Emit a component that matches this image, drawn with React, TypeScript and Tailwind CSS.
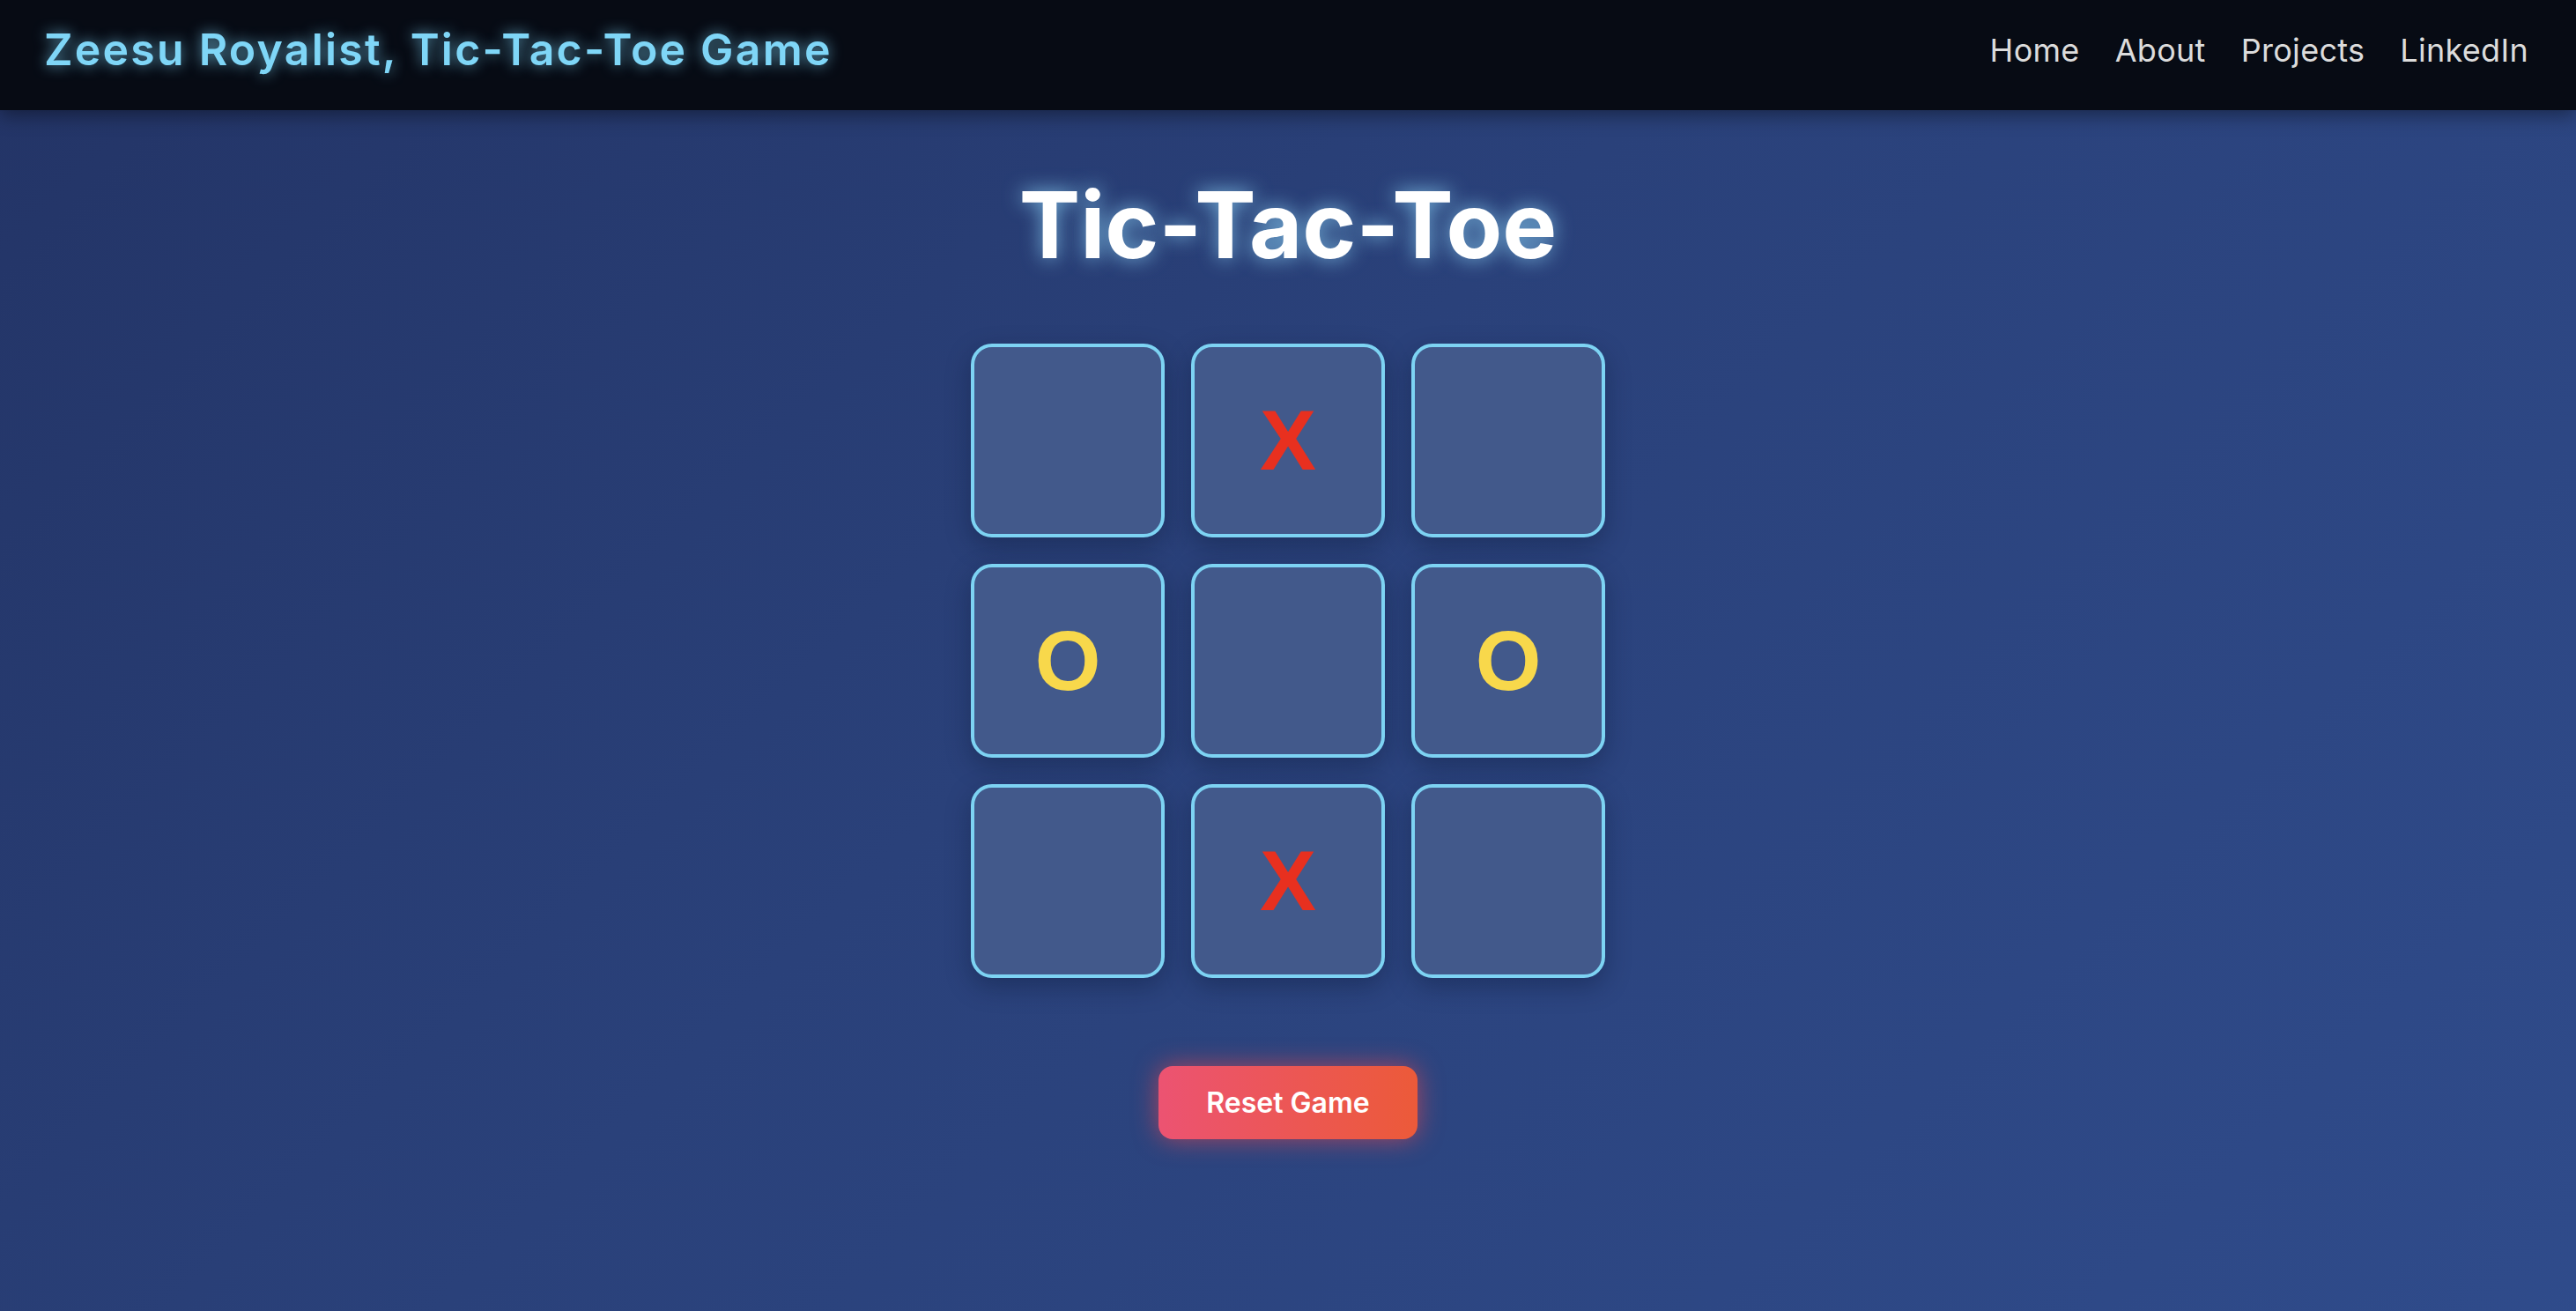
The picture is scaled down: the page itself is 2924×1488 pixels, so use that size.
import React, { useState } from "react";

const NavLinks = ["Home", "About", "Projects", "LinkedIn"];

const StartBoard = ["", "X", "", "O", "", "O", "", "X", ""];

const Cell = ({ value, onClick }: { value: string; onClick: () => void }) => (
    <button
        onClick={onClick}
        className="flex items-center justify-center w-[220px] h-[220px] rounded-[24px] border-[4px] border-[#7dd3f3] bg-[#42598b] shadow-[0_10px_28px_rgba(10,20,50,0.35)] font-['Liberation_Sans',Arial,sans-serif] font-bold text-[96px] leading-none"
    >
        <span className={value === "X" ? "text-[#e8301f]" : "text-[#f8d84b]"}>{value}</span>
    </button>
);

const App = () => {
    const [board, setBoard] = useState<string[]>(StartBoard);

    return (
        <div className="min-h-screen w-full flex flex-col bg-[linear-gradient(135deg,#233466_0%,#2a417a_45%,#32509186_100%)] bg-[#2c4684] font-['Inter','Noto_Sans',sans-serif]">
            <header className="flex items-center justify-between h-[125px] px-[50px] pb-[12px] bg-[#070b14] shadow-[0_6px_20px_rgba(0,0,0,0.4)]">
                <h1 className="text-[50px] font-semibold text-[#7fd6f7] tracking-[2.2px] [text-shadow:0_0_16px_rgba(125,211,245,0.75)]">
                    Zeesu Royalist, Tic-Tac-Toe Game
                </h1>
                <nav className="flex items-center gap-[40px] pr-[4px]">
                    {NavLinks.map((link) => (
                        <a key={link} href="#" className="text-[36px] tracking-[0.3px] text-[#dcdcdc]">
                            {link}
                        </a>
                    ))}
                </nav>
            </header>

            <main className="flex flex-col items-center">
                <h2 className="mt-[70px] text-[104px] leading-[120px] font-bold text-white [text-shadow:0_0_22px_rgba(140,210,245,0.8)]">
                    Tic-Tac-Toe
                </h2>

                <div className="grid grid-cols-3 gap-[30px] mt-[75px]">
                    {board.map((value, i) => (
                        <Cell
                            key={i}
                            value={value}
                            onClick={() => {
                                if (board[i]) return;
                                const next = [...board];
                                next[i] = "X";
                                setBoard(next);
                            }}
                        />
                    ))}
                </div>

                <button
                    onClick={() => setBoard(Array(9).fill(""))}
                    className="mt-[100px] h-[83px] px-[54px] rounded-[16px] bg-[linear-gradient(90deg,#ec5372,#ec5a39)] text-white text-[32px] font-semibold shadow-[0_0_28px_rgba(236,70,80,0.65)]"
                >
                    Reset Game
                </button>
            </main>
        </div>
    );
};

export default App;
